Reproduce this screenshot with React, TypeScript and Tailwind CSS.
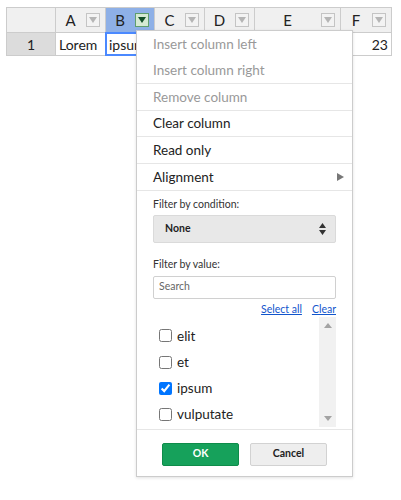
import React from 'react'

const font = { fontFamily: 'Lato, "Noto Sans", sans-serif' }

function HeaderButton({ active }: { active?: boolean }) {
  return (
    <span
      className={`absolute right-[5px] top-[5px] flex h-[14px] w-[14px] items-center justify-center border ${
        active ? 'border-[#5f9e6e] bg-[#d5ead3]' : 'border-[#c4c4c4] bg-[#f3f3f3]'
      }`}
    >
      <svg width="8" height="6" viewBox="0 0 8 6">
        <path d="M0 0 H8 L4 6 Z" fill={active ? '#14502a' : '#b5b5b5'} />
      </svg>
    </span>
  )
}

const cols = [
  { label: 'A', w: 'w-[50px]' },
  { label: 'B', w: 'w-[49px]', active: true },
  { label: 'C', w: 'w-[50px]' },
  { label: 'D', w: 'w-[50px]' },
  { label: 'E', w: 'w-[86px]' },
  { label: 'F', w: 'w-[51px]' },
]

const menuItems = [
  { label: 'Insert column left', disabled: true, sep: false },
  { label: 'Insert column right', disabled: true, sep: true },
  { label: 'Remove column', disabled: true, sep: true },
  { label: 'Clear column', sep: true },
  { label: 'Read only', sep: true },
  { label: 'Alignment', sep: true, sub: true },
]

const values = [
  { label: 'elit', checked: false },
  { label: 'et', checked: false },
  { label: 'ipsum', checked: true },
  { label: 'vulputate', checked: false },
]

export default function App() {
  return (
    <div className="relative h-[500px] w-[401px] bg-white text-[14px] text-[#222]" style={font}>
      {/* Grid */}
      <div className="pl-[6px] pt-[7px]">
        <div className="flex">
          <div className="h-[26px] w-[50px] border-b border-l border-r border-t border-[#cccccc] bg-[#f0f0f0]" />
          {cols.map((c) => (
            <div
              key={c.label}
              className={`relative h-[26px] border-b border-r border-t border-[#cccccc] ${c.w} ${
                c.active ? 'bg-[#8eb0e7]' : 'bg-[#f0f0f0]'
              }`}
            >
              <div className="flex h-full items-center justify-center pr-[20px] text-[15px] text-[#222]">{c.label}</div>
              <HeaderButton active={c.active} />
            </div>
          ))}
        </div>
        <div className="flex text-[14px]">
          <div className="flex h-[23px] w-[50px] items-center justify-center border-b border-l border-r border-[#cccccc] bg-[#dcdcdc]">
            1
          </div>
          <div className="flex h-[23px] w-[50px] items-center border-b border-r border-[#cccccc] px-[3px]">Lorem</div>
          <div className="relative flex h-[23px] w-[49px] items-center border-b border-r border-[#cccccc] px-[3px]">
            ipsum
            <span className="absolute -left-[1px] -top-[1px] bottom-[-1px] right-[-1px] border-2 border-[#4b89ff]" />
          </div>
          <div className="h-[23px] w-[50px] border-b border-r border-[#cccccc]" />
          <div className="h-[23px] w-[50px] border-b border-r border-[#cccccc]" />
          <div className="h-[23px] w-[86px] border-b border-r border-[#cccccc]" />
          <div className="flex h-[23px] w-[51px] items-center justify-end border-b border-r border-[#cccccc] px-[3px]">
            23
          </div>
        </div>
      </div>

      {/* Column menu */}
      <div className="absolute left-[136px] top-[30px] w-[217px] border border-[#cccccc] bg-white shadow-[0_1px_3px_rgba(0,0,0,0.12)]">
        {menuItems.map((m) => (
          <div
            key={m.label}
            className={`flex h-[26.6px] items-center justify-between pl-[16px] pr-[8px] text-[13.5px] ${
              m.sep ? 'border-b border-[#e6e6e6]' : ''
            } ${m.disabled ? 'text-[#999]' : 'text-[#222]'}`}
          >
            <span>{m.label}</span>
            {m.sub && (
              <svg width="7" height="8" viewBox="0 0 7 8">
                <path d="M0 0 L7 4 L0 8 Z" fill="#777" />
              </svg>
            )}
          </div>
        ))}

        <div className="px-[16px]">
          <div className="pt-[6px] text-[10.5px] leading-[15px] text-[#333]">Filter by condition:</div>
          <div className="mt-[3px] flex h-[28px] items-center justify-between rounded-[2px] border border-[#dadada] bg-[#e8e8e8] pl-[11px] pr-[9px]">
            <span className="text-[10.5px] font-bold text-[#222]">None</span>
            <svg width="7" height="12" viewBox="0 0 7 12">
              <path d="M3.5 0 L7 5 H0 Z M0 7 H7 L3.5 12 Z" fill="#333" />
            </svg>
          </div>

          <div className="pt-[14px] text-[10.5px] leading-[15px] text-[#333]">Filter by value:</div>
          <div className="mt-[4px] flex h-[23px] items-center rounded-[2px] border border-[#d0d0d0] bg-white px-[5px] text-[10.5px] text-[#666]">
            Search
          </div>
          <div className="flex justify-end gap-[10px] pt-[3px] text-[10.5px] leading-[15px] text-[#1155cc]">
            <span className="underline">Select all</span>
            <span className="underline">Clear</span>
          </div>

          <div className="flex h-[110px]">
            <div className="flex-1 pt-[6px]">
              {values.map((v) => (
                <label key={v.label} className="flex h-[26.3px] items-center gap-[5px] pl-[6px] text-[13.5px] text-[#222]">
                  <input
                    type="checkbox"
                    defaultChecked={v.checked}
                    className="m-0 h-[13px] w-[13px] accent-[#0075ff]"
                  />
                  {v.label}
                </label>
              ))}
            </div>
            <div className="flex w-[17px] flex-col items-center justify-between bg-[#f1f1f1] py-[6px]">
              <svg width="8" height="5" viewBox="0 0 8 5">
                <path d="M4 0 L8 5 H0 Z" fill="#a3a3a3" />
              </svg>
              <svg width="8" height="5" viewBox="0 0 8 5">
                <path d="M0 0 H8 L4 5 Z" fill="#a3a3a3" />
              </svg>
            </div>
          </div>
        </div>

        <div className="mt-[2px] flex justify-center gap-[11px] border-t border-[#e6e6e6] pb-[10px] pt-[13px]">
          <button className="h-[23px] w-[77px] rounded-[2px] border border-[#0e8c4a] bg-[#16a15b] text-[10.5px] font-bold text-white">
            OK
          </button>
          <button className="h-[23px] w-[77px] rounded-[2px] border border-[#d2d2d2] bg-[#eeeeee] text-[10.5px] font-bold text-[#222]">
            Cancel
          </button>
        </div>
      </div>
    </div>
  )
}
